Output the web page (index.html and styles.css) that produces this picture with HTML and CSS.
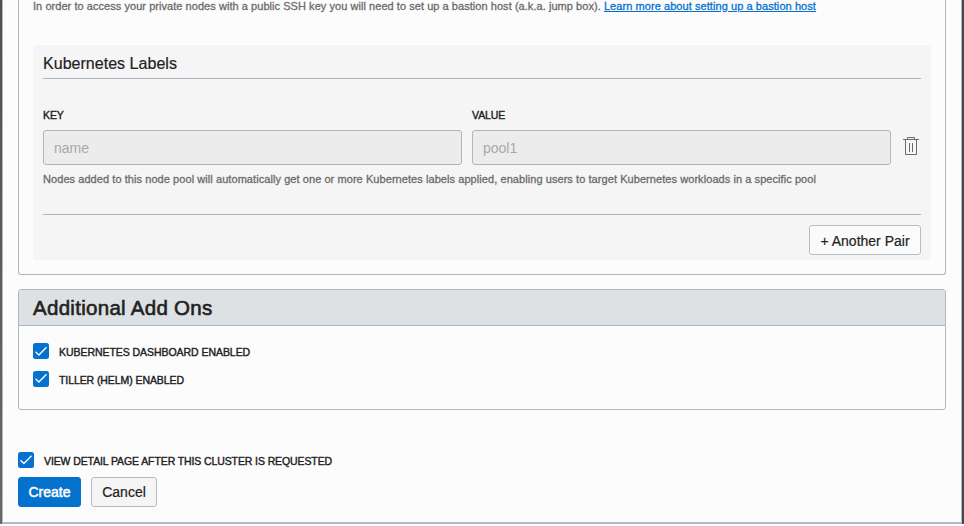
FILE: index.html
```html
<!DOCTYPE html>
<html lang="en">
<head>
<meta charset="utf-8">
<title>Create Cluster</title>
<link rel="stylesheet" href="styles.css">
</head>
<body>
<main class="dialog">
  <section class="pool">
    <p class="hint bastion"><span class="bastion-text">In order to access your private nodes with a public SSH key you will need to set up a bastion host (a.k.a. jump box).</span> <a class="link" href="#">Learn more about setting up a bastion host</a></p>
    <div class="labels">
      <h3 class="labels-title"><span>Kubernetes Labels</span></h3>
      <div class="pair">
        <label class="field"><span class="caption">KEY</span><input class="input" placeholder="name" disabled></label>
        <label class="field"><span class="caption">VALUE</span><input class="input" placeholder="pool1" disabled></label>
        <svg class="trash" width="16" height="19" viewBox="0 0 16 19" fill="none" stroke="#6b6b6b"><path d="M0 2.5h16M4.5 2.5v-2h7v2M2.5 2.5v15h11v-15M6.5 6v9M9.5 6v9"/></svg>
      </div>
      <p class="hint nodes">Nodes added to this node pool will automatically get one or more Kubernetes labels applied, enabling users to target Kubernetes workloads in a specific pool</p>
      <div class="pair-actions"><button class="button add"><span>+ Another Pair</span></button></div>
    </div>
  </section>
  <section class="addons">
    <h2 class="addons-title"><span>Additional Add Ons</span></h2>
    <div class="addons-body">
      <div class="check"><svg class="box" width="16" height="16" viewBox="0 0 16 16"><rect width="16" height="16" rx="2.5" fill="#0572ce"/><path d="M2.5 8.7l3.4 3.3 7.6-7.8" fill="none" stroke="#fff" stroke-width="1.3"/></svg><span class="caption dashboard">KUBERNETES DASHBOARD ENABLED</span></div>
      <div class="check"><svg class="box" width="16" height="16" viewBox="0 0 16 16"><rect width="16" height="16" rx="2.5" fill="#0572ce"/><path d="M2.5 7.7l3.4 3.3 7.6-7.8" fill="none" stroke="#fff" stroke-width="1.3"/></svg><span class="caption tiller">TILLER (HELM) ENABLED</span></div>
    </div>
  </section>
  <div class="check detail"><svg class="box" width="16" height="16" viewBox="0 0 16 16"><rect width="16" height="16" rx="2.5" fill="#0572ce"/><path d="M2.5 8.2l3.4 3.3 7.6-7.8" fill="none" stroke="#fff" stroke-width="1.3"/></svg><span class="caption view">VIEW DETAIL PAGE AFTER THIS CLUSTER IS REQUESTED</span></div>
  <div class="actions"><button class="button primary"><span>Create</span></button><button class="button cancel"><span>Cancel</span></button></div>
</main>
</body>
</html>
```
FILE: styles.css
```css
* { box-sizing: border-box; }
html { background: #fff; }
body {
  margin: 0;
  height: 524px;
  padding: 0 2px;
  overflow: hidden;
  background: linear-gradient(#505052, #68686a) left / 2px 523px no-repeat, #48484a;
  font-family: "Liberation Sans", Arial, sans-serif;
  color: #222;
}
.dialog {
  height: 524px;
  padding: 0 15px;
  background: #fcfcfc;
  border: solid #b3b8c3;
  border-width: 0 1px 2px;
}
h2, h3, p { margin: 0; font-weight: normal; }
.pool {
  height: 275px;
  padding: 0 14px;
  border: 1px solid #aeb6c1;
  border-top: 0;
  border-radius: 0 0 3px 3px;
}
.hint {
  font-size: 11px;
  line-height: 14px;
  color: #6b6b6b;
  white-space: nowrap;
  letter-spacing: 0.067px;
  -webkit-text-stroke: 0.3px;
}
.bastion { height: 45px; line-height: 12px; letter-spacing: 0.05px; }
.link {
  color: #0572ce;
  letter-spacing: 0.07px;
  text-decoration: underline;
  text-underline-offset: 1px;
}
.labels {
  height: 215px;
  padding: 0 10px;
  background: #f5f5f5;
  border-radius: 3px;
}
.labels-title {
  height: 34px;
  padding-top: 9px;
  border-bottom: 1px solid #aeb6c1;
  font-size: 16px;
  line-height: 20px;
  letter-spacing: 0.03px;
  -webkit-text-stroke: 0.2px;
}
.pair { display: flex; gap: 10px; margin-top: 29px; }
.field { display: flex; flex-direction: column; width: 419px; }
.caption {
  font-size: 10.5px;
  line-height: 14px;
  letter-spacing: -0.08px;
  white-space: nowrap;
  -webkit-text-stroke: 0.4px;
}
.dashboard { letter-spacing: -0.05px; }
.view { letter-spacing: -0.105px; }
.input {
  height: 35px;
  margin-top: 8px;
  padding: 0 10px;
  border: 1px solid #aeb6c1;
  border-radius: 3px;
  background: #ececec;
  font: 14px "Liberation Sans", Arial, sans-serif;
}
.input::placeholder { color: #a9a9a9; opacity: 1; }
.trash { flex: none; margin: 29px 0 0 2px; }
.nodes { margin-top: 7px; }
.pair-actions {
  display: flex;
  justify-content: flex-end;
  margin-top: 28px;
  padding-top: 10px;
  border-top: 1px solid #aeb6c1;
}
.button {
  height: 30px;
  padding: 0;
  border: 1px solid #b6bcc6;
  border-radius: 3px;
  background: #f5f5f5;
  font: 14px "Liberation Sans", Arial, sans-serif;
  color: #222;
  white-space: nowrap;
  -webkit-text-stroke: 0.2px;
}
.add { width: 112px; padding-top: 2px; background: #fbfbfb; }
.addons {
  height: 121px;
  margin-top: 14px;
  border: 1px solid #aeb6c1;
  border-radius: 3px;
}
.addons-title {
  height: 36px;
  padding: 6px 14px 0;
  border-bottom: 1px solid #aeb6c1;
  border-radius: 2px 2px 0 0;
  background: #dde1e4;
  font-size: 20.5px;
  line-height: 24px;
  letter-spacing: 0.29px;
  -webkit-text-stroke: 0.6px;
}
.addons-body { display: flex; flex-direction: column; gap: 12px; padding: 17px 14px; }
.check { display: flex; gap: 10px; height: 16px; }
.check .caption { padding-top: 2px; }
.detail { margin-top: 42px; }
.actions { display: flex; gap: 10px; margin-top: 9px; }
.primary { width: 63px; background: #0572ce; border-color: #0572ce; color: #fff; -webkit-text-stroke: 0.5px; }
.cancel { width: 66px; }
```
